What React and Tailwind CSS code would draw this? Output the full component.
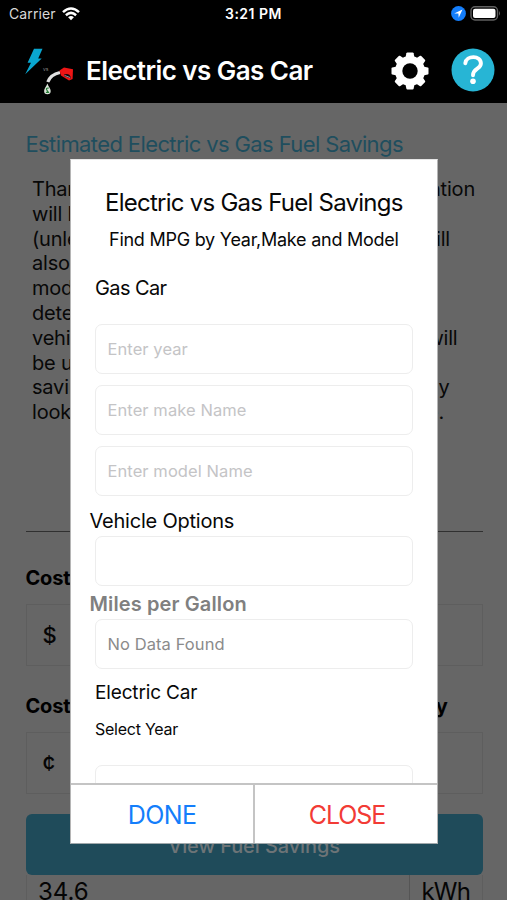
import React from "react";

const LINES = [
  ["Thank you for using this", "information", 443],
  ["will be used to find your", "", 443],
  ["(unless you enter MPG)", "We will", 418],
  ["also need the make and", "", 418],
  ["model of your car to", "", 418],
  ["determine mileage for", "", 418],
  ["vehicle. The data", "will", 425.5],
  ["be used to estimate", "", 425],
  ["savings and you", "may", 417.5],
  ["look up your car", "here.", 412],
];

function Header() {
  return (
    <header className="h-[103px] bg-black text-white">
      <div className="flex h-[27px] items-center">
        <span className="ml-[9px] w-[48px] whitespace-nowrap text-[14px] tracking-[0.1px] text-[#d8d8d8]">Carrier</span>
        <svg className="ml-[5px] h-[14px] w-[18px]" viewBox="0 0 18 14" fill="none" stroke="#fff" strokeWidth="2.5">
          <path d="M1 5.2Q9-2.2 17 5.2M3.9 8.2Q9 3.6 14.1 8.2" />
          <path d="M9 13.2 6.1 10.3Q9 7.9 11.9 10.3Z" fill="#fff" stroke="none" />
        </svg>
        <span className="ml-[145px] w-[60px] whitespace-nowrap text-[14px] font-semibold tracking-[0.5px]">3:21 PM</span>
        <svg className="ml-[166px] h-[15px] w-[15px]" viewBox="0 0 15 15">
          <circle cx="7.5" cy="7.5" r="7.4" fill="#147efb" />
          <path d="M11.5 3.5 3.2 7.4 7.4 7.6 7.7 11.8Z" fill="#fff" />
        </svg>
        <svg className="ml-[4px] h-[15px] w-[31px]" viewBox="0 0 31 15">
          <rect x="1" y="0.8" width="26.5" height="13.2" rx="4" fill="none" stroke="#606060" strokeWidth="1.4" />
          <rect x="3" y="2.8" width="22.5" height="9.2" rx="2" fill="#fff" />
          <path d="M29 5Q31 7.4 29 9.8Z" fill="#606060" />
        </svg>
      </div>
      <div className="flex h-[76px] items-start">
        <svg className="ml-[22px] mt-[19px] h-[52px] w-[54px]" viewBox="22 46 54 52">
          <path d="M34 48.8H42.5L38.2 58.6H41.7L25.2 74.3 31 62.7H27.6Z" fill="#09a6cf" />
          <text x="43" y="70.7" fontSize="5" fill="#888">vs</text>
          <path d="M47.8 82Q50.5 74.5 60 72.5" fill="none" stroke="#e0e0e0" strokeWidth="3.2" />
          <path d="M59.5 70.5 64 67.5 73 69.3 72.6 79 69 80.5 61 75.5Z" fill="#ee1515" />
          <path d="M64 74.5Q70 72.7 71 78.5L64.5 76.3Z" fill="#16060c" />
          <path d="M64.5 75.4 70.3 77.6" stroke="#9ca3af" strokeWidth="0.9" />
          <path d="M47.4 83.5C46.2 87 44.1 88.5 44.1 90.9A3.3 3.3 0 0 0 50.7 90.9C50.7 88.5 48.4 87 47.4 83.5Z" fill="#d9e3d8" />
          <path d="M48.7 88.2Q45.4 87.7 46.8 90T48.6 92.4 45.9 92.4" fill="none" stroke="#267b35" strokeWidth="1.2" />
        </svg>
        <h1 className="ml-[9px] mt-[24px] w-[305px] whitespace-nowrap pl-px text-[26px] font-semibold leading-10 tracking-[-0.55px]">Electric vs Gas Car</h1>
        <svg className="mt-[23.5px] h-[40px] w-[40px]" viewBox="-20 -20 40 40">
          <g fill="#fff">
            <circle r="15" />
            {[0, 45, 90, 135, 180, 225, 270, 315].map((a) => (
              <path key={a} transform={`rotate(${a})`} d="M-4.6-13-3.6-17.8Q-3.4-18.5-2.6-18.5H2.6Q3.4-18.5 3.6-17.8L4.6-13Z" />
            ))}
          </g>
          <circle r="7.7" fill="#000" />
        </svg>
        <svg className="ml-[21px] mt-[21px] h-[44px] w-[44px]" viewBox="0 0 44 44">
          <circle cx="22" cy="22" r="21.5" fill="#27b5d5" />
          <path d="M14.3 15.3C15.2 7 30 7.1 29.9 15.5C29.9 21.1 22 20.3 22 27.2" fill="none" stroke="#fff" strokeWidth="3.9" strokeLinecap="round" />
          <circle cx="22" cy="33.3" r="2.8" fill="#fff" />
        </svg>
      </div>
    </header>
  );
}

function CostField({ title, tail, unit }) {
  return (
    <section className="h-[128px]">
      <div className="flex h-[26px] items-center justify-between pr-[35px] text-[20px] font-bold tracking-[-0.2px]">
        <span>{title}</span>
        <span>{tail}</span>
      </div>
      <div className="mt-[13px] flex h-[62px] items-center border border-[#5e5e5e] pl-[16px] text-[22px] font-medium text-[#050505]">{unit}</div>
    </section>
  );
}

function Page() {
  return (
    <main className="h-[797px] overflow-hidden bg-[#666] pl-[25.5px] pr-[24.5px] pt-[26px] text-black">
      <h2 className="h-[30px] whitespace-nowrap text-[22px] leading-[30px] tracking-[-0.61px] text-[#1f4e5e]">Estimated Electric vs Gas Fuel Savings</h2>
      <div className="ml-[6.5px] mt-[18px] h-[354px] text-[20px] leading-[24.8px] tracking-[-0.2px] text-[#080808]">
        {LINES.map(([start, end, width]) => (
          <div key={start} className="flex justify-between whitespace-nowrap" style={{ width }}>
            <span>{start}</span>
            <span>{end}</span>
          </div>
        ))}
      </div>
      <hr className="border-t border-[#303030]" />
      <div className="mt-[33px]">
        <CostField title="Cost of Gas" tail="" unit="$" />
        <CostField title="Cost of" tail="Electricity" unit="¢" />
      </div>
      <button className="-mt-[7px] flex h-[61px] w-[457px] items-center justify-center rounded-[6px] bg-[#1f4b5a] pt-[2px] text-[20px] font-medium tracking-[-0.1px] text-[#6d7477]">View Fuel Savings</button>
      <div className="flex h-[60px] w-[457px] border-x border-[#5e5e5e] text-[24px] leading-[34px] text-[#050505]">
        <span className="flex-1 pl-[11.5px]">34.6</span>
        <span className="w-[73px] border-l border-[#555] pl-[12px] tracking-[-0.8px]">kWh</span>
      </div>
    </main>
  );
}

function Field({ children, className = "" }) {
  return (
    <div className={`flex h-[50px] w-[318px] shrink-0 items-center rounded-[7px] border border-[#ededed] pl-[11.5px] text-[16.5px] tracking-[0.08px] ${className}`}>
      {children}
    </div>
  );
}

function Modal() {
  return (
    <div className="absolute left-[70px] top-[159px] flex h-[685px] w-[368px] flex-col border border-[#b5b5b5] border-b-[#a0a8ab] border-t-[#e6e6e6] bg-white text-[#080808]">
      <div className="flex h-[623px] flex-col overflow-hidden pl-[24px]">
        <div className="mt-[27px] h-[32px] pl-[10px] text-[24px] leading-[32px] tracking-[-0.75px] whitespace-nowrap">Electric vs Gas Fuel Savings</div>
        <div className="mt-[9px] h-[24px] pl-[14px] text-[18px] leading-[24px] tracking-[-0.25px] whitespace-nowrap">Find MPG by Year,Make and Model</div>
        <div className="mt-[22px] h-[28px] text-[20px] leading-[28px] tracking-[-0.6px]">Gas Car</div>
        <div className="mt-[22px] flex flex-col gap-[11px] text-[#c4c4c6]">
          <Field>Enter year</Field>
          <Field>Enter make Name</Field>
          <Field>Enter model Name</Field>
        </div>
        <div className="-ml-[5.5px] mt-[10px] h-[30px] text-[20px] leading-[30px] tracking-[-0.22px]">Vehicle Options</div>
        <Field />
        <div className="-ml-[5.5px] mt-[4px] h-[29px] text-[20px] font-semibold leading-[29px] tracking-[0.12px] text-[#808080]">Miles per Gallon</div>
        <Field className="text-[#8b8b8b]">No Data Found</Field>
        <div className="mt-[10px] h-[28px] text-[19px] leading-[28px] tracking-[-0.15px]">Electric Car</div>
        <div className="mt-[10px] h-[24px] text-[16px] leading-[24px] tracking-[-0.25px]">Select Year</div>
        <Field className="mt-[24px]" />
      </div>
      <div className="flex h-[60px] shrink-0 border-t-2 border-[#c4c4c4] text-[25px]">
        <button className="flex w-[184px] items-center justify-center border-r-2 border-[#c4c4c4] pt-[3px] tracking-[-0.6px] text-[#147efb]">DONE</button>
        <button className="flex flex-1 items-center justify-center pl-[2px] pt-[3px] tracking-[-1.1px] text-[#f23b35]">CLOSE</button>
      </div>
    </div>
  );
}

export default function App() {
  return (
    <div className="relative h-[900px] w-[507px] overflow-hidden bg-[#666] font-['Inter',sans-serif]">
      <Header />
      <Page />
      <Modal />
    </div>
  );
}
